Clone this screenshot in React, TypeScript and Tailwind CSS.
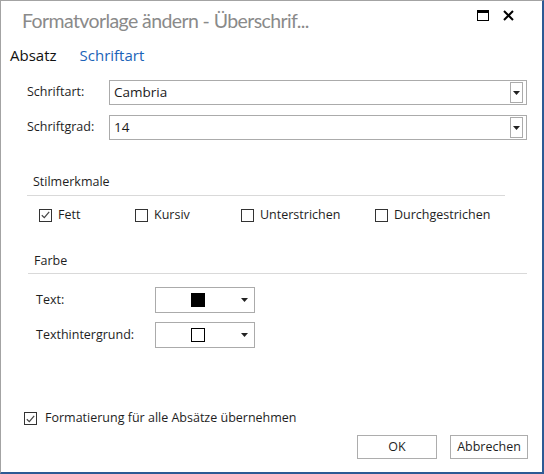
const font = { fontFamily: '"Segoe UI", "Open Sans", sans-serif' };

const Caret = () => (
  <svg width="7" height="4" viewBox="0 0 7 4" className="block">
    <path d="M0 0h7L3.5 4z" fill="#222" />
  </svg>
);

const Check = ({ checked }: { checked?: boolean }) => (
  <span className="w-[13px] h-[13px] border border-[#333] bg-white flex items-center justify-center shrink-0">
    {checked && (
      <svg width="9" height="8" viewBox="0 0 9 8">
        <path d="M0.8 4.2L3.3 6.6L8.2 0.8" fill="none" stroke="#444" strokeWidth="1.2" />
      </svg>
    )}
  </span>
);

const Select = ({ value }: { value: string }) => (
  <div className="flex-1 h-[25px] border border-[#ababab] bg-white flex items-center pl-[4px] pr-[3px]">
    <span className="flex-1 text-[13.5px] text-[#1a1a1a]">{value}</span>
    <div className="w-[13px] h-[21px] border border-[#ababab] flex items-center justify-center">
      <Caret />
    </div>
  </div>
);

const ColorPick = ({ fill }: { fill: boolean }) => (
  <div className="w-[100px] h-[26px] border border-[#ababab] bg-white flex items-center pl-[35px] pr-[6px]">
    <span
      className={`w-[14px] h-[14px] border border-black ${fill ? "bg-black" : "bg-white"}`}
    ></span>
    <span className="flex-1" />
    <Caret />
  </div>
);

const StyleOpt = ({ label, checked, w }: { label: string; checked?: boolean; w: string }) => (
  <div className={`flex items-center gap-[6px] ${w}`}>
    <Check checked={checked} />
    <span>{label}</span>
  </div>
);

export default function App() {
  return (
    <div
      style={font}
      className="w-[544px] h-[474px] bg-white border-l border-t border-[#a3a3a3] border-r-2 border-b-2 border-r-[#2d5a94] border-b-[#2d5a94] flex flex-col text-[12.5px] text-[#1e1e1e]"
    >
      {/* title bar */}
      <div className="flex items-start h-[40px] pl-[21px] pr-[28px]">
        <span
          style={{ fontFamily: 'Lato, "Open Sans", sans-serif' }}
          className="flex-1 pt-[6px] text-[19.5px] tracking-[-0.6px] text-[#8a8a8a] leading-[28px]"
        >
          Formatvorlage ändern - Überschrif...
        </span>
        <div className="flex items-center gap-[14px] pt-[9px]">
          <span className="w-[12px] h-[11px] border border-black border-t-[3px]"></span>
          <svg width="11" height="11" viewBox="0 0 11 11">
            <path d="M1 1L10 10M10 1L1 10" stroke="#000" strokeWidth="2" />
          </svg>
        </div>
      </div>

      {/* tabs */}
      <div className="flex gap-[23px] pl-[9px] text-[15px] h-[28px] items-center">
        <span className="text-[#111]">Absatz</span>
        <span className="text-[#1b63b8]">Schriftart</span>
      </div>

      {/* font fields */}
      <div className="flex flex-col gap-[10px] pl-[26px] pr-[15px] mt-[11px]">
        <div className="flex items-center">
          <span className="w-[82px]">Schriftart:</span>
          <Select value="Cambria" />
        </div>
        <div className="flex items-center">
          <span className="w-[82px]">Schriftgrad:</span>
          <Select value="14" />
        </div>
      </div>

      {/* Stilmerkmale */}
      <div className="ml-[26px] mr-[37px] mt-[33px] border-b border-[#d9d9d9] pl-[6px] pb-[3px]">
        Stilmerkmale
      </div>
      <div className="flex items-center pl-[38px] mt-[10px]">
        <StyleOpt label="Fett" checked w="w-[96px]" />
        <StyleOpt label="Kursiv" w="w-[106px]" />
        <StyleOpt label="Unterstrichen" w="w-[134px]" />
        <StyleOpt label="Durchgestrichen" w="w-[140px]" />
      </div>

      {/* Farbe */}
      <div className="ml-[27px] mr-[15px] mt-[27px] border-b border-[#d9d9d9] pl-[6px] pb-[3px]">
        Farbe
      </div>
      <div className="flex flex-col gap-[9px] pl-[35px] mt-[13px]">
        <div className="flex items-center">
          <span className="w-[119px]">Text:</span>
          <ColorPick fill />
        </div>
        <div className="flex items-center">
          <span className="w-[119px]">Texthintergrund:</span>
          <ColorPick fill={false} />
        </div>
      </div>

      <div className="flex-1" />

      {/* footer */}
      <div className="flex items-center gap-[8px] pl-[23px]">
        <Check checked />
        <span>Formatierung für alle Absätze übernehmen</span>
      </div>
      <div className="flex justify-end gap-[13px] pr-[14px] mt-[7px] mb-[13px]">
        <button className="w-[80px] h-[24px] border border-[#adadad] bg-white">OK</button>
        <button className="w-[78px] h-[24px] border border-[#adadad] bg-white">Abbrechen</button>
      </div>
    </div>
  );
}
